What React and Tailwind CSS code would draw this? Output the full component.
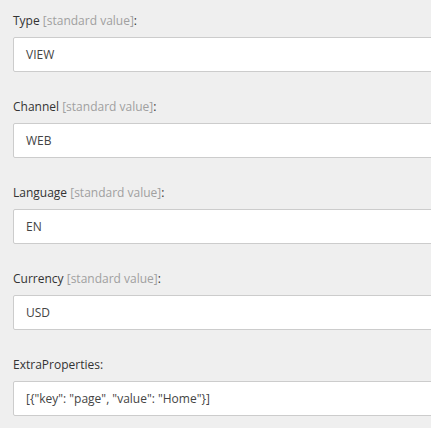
const fields = [
  { label: "Type", std: true, value: "VIEW" },
  { label: "Channel", std: true, value: "WEB" },
  { label: "Language", std: true, value: "EN" },
  { label: "Currency", std: true, value: "USD" },
  { label: "ExtraProperties", std: false, value: '[{"key": "page", "value": "Home"}]' },
];

export default function App() {
  return (
    <div
      className="min-h-[428px] w-[431px] overflow-hidden bg-[#efefef] pl-[13px] pt-[12px]"
      style={{ fontFamily: '"Open Sans", sans-serif' }}
    >
      {fields.map((f) => (
        <div key={f.label} className="mb-[26px]">
          <div className="mb-[8px] h-[17px] text-[12px] leading-[17px] text-[#333]">
            {f.label}
            {f.std && <span className="text-[#a0a0a0]"> [standard value]</span>}:
          </div>
          <div className="flex h-[35px] w-[440px] items-center rounded-[2px] border border-[#cccccc] bg-white px-[12px] text-[12px] text-[#444]">
            {f.value}
          </div>
        </div>
      ))}
    </div>
  );
}
